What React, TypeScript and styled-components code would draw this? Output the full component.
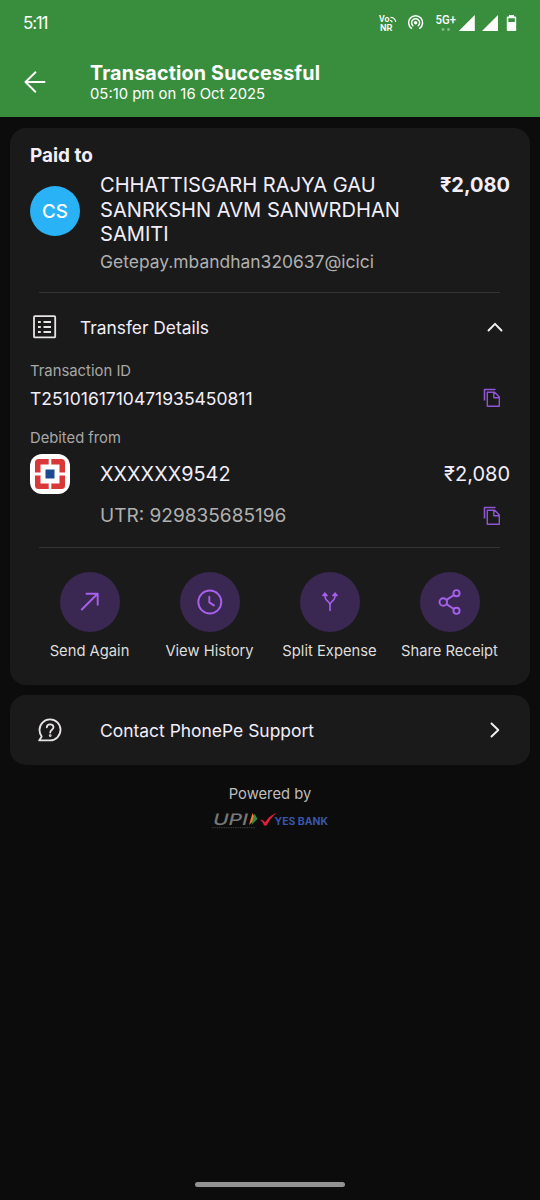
import React from "react";
import styled, { createGlobalStyle } from "styled-components";

const GlobalStyle = createGlobalStyle`
  *, *::before, *::after { box-sizing: border-box; }
  html, body { margin: 0; background: #0c0c0c; }
  body { font-family: Inter, Roboto, "Liberation Sans", sans-serif; color: #f2eefb; }
  svg { display: block; flex: none; }
`;

const Screen = styled.div`
  display: flex;
  flex-direction: column;
  height: 1200px;
  background: #0c0c0c;
  overflow: hidden;
`;

const Header = styled.header`
  height: 117px;
  background: #398e3d;
  color: #fff;
`;

const StatusBar = styled.div`
  display: flex;
  align-items: center;
  height: 46px;
  padding: 0 22px 0 23px;
`;

const Clock = styled.span`
  flex: 1;
  font-size: 17px;
  letter-spacing: -1.2px;
`;

const TitleBar = styled.div`
  display: flex;
  align-items: center;
  height: 71px;
  padding-left: 24px;
`;

const Titles = styled.div`
  display: flex;
  flex-direction: column;
  margin: 3px 0 0 44px;
`;

const Title = styled.h1`
  margin: 0;
  font-size: 19.7px;
  font-weight: 700;
  line-height: 22px;
  letter-spacing: 0.17px;
`;

const Subtitle = styled.span`
  font-size: 14.85px;
  line-height: 20px;
`;

const Card = styled.section`
  display: flex;
  flex-direction: column;
  margin: 11px 10px 0;
  padding: 16px 20px 0;
  height: 557px;
  border-radius: 16px;
  background: #1a1a1a;
`;

const Text = styled.span<{ $size: number; $line: number; $weight?: number; $color?: string; $spacing?: number }>`
  display: block;
  font-size: ${(p) => p.$size}px;
  line-height: ${(p) => p.$line}px;
  font-weight: ${(p) => p.$weight ?? 400};
  color: ${(p) => p.$color ?? "#f2eefb"};
  letter-spacing: ${(p) => p.$spacing ?? 0}px;
  white-space: nowrap;
`;

const Payee = styled.div`
  display: flex;
  margin-top: 5px;
  height: 101px;
`;

const Avatar = styled.div`
  display: flex;
  align-items: center;
  justify-content: center;
  width: 50px;
  height: 50px;
  margin: 13px 20px 0 0;
  border-radius: 50%;
  background: #29b2f5;
  color: #fff;
  font-size: 18.8px;
  font-weight: 500;
`;

const PayeeInfo = styled.div`
  flex: 1;
  display: flex;
  flex-direction: column;
  gap: 4px;
`;

const Divider = styled.hr`
  width: 461px;
  height: 1px;
  margin: 0 0 0 9px;
  border: 0;
  background: #333;
`;

const DetailsRow = styled.div`
  display: flex;
  align-items: center;
  height: 68px;
  padding: 0 7px 0 2px;
`;

const Row = styled.div<{ $height: number; $top: number; $indent?: number; $end?: number }>`
  display: flex;
  align-items: center;
  height: ${(p) => p.$height}px;
  margin-top: ${(p) => p.$top}px;
  padding: 0 ${(p) => p.$end ?? 0}px 0 ${(p) => p.$indent ?? 0}px;
`;

const Grow = styled.div`
  flex: 1;
`;

const BankLogo = styled.div`
  display: flex;
  align-items: center;
  justify-content: center;
  width: 40px;
  height: 40px;
  margin-right: 30px;
  border-radius: 12px;
  background: #fff;
`;

const Actions = styled.div`
  display: grid;
  grid-template-columns: repeat(4, 120px);
  padding-top: 24px;
  margin-left: -0.5px;
`;

const Action = styled.div`
  display: flex;
  flex-direction: column;
  align-items: center;
  gap: 9px;
`;

const ActionCircle = styled.div`
  display: flex;
  align-items: center;
  justify-content: center;
  width: 60px;
  height: 60px;
  border-radius: 50%;
  background: #3a2752;
`;

const SupportCard = styled.section`
  display: flex;
  align-items: center;
  height: 70px;
  margin: 10px 10px 0;
  padding: 0 30px 0 27px;
  border-radius: 16px;
  background: #1a1a1a;
`;

const Footer = styled.footer`
  flex: 1;
  display: flex;
  flex-direction: column;
  align-items: center;
  padding-top: 19px;
`;

const Brands = styled.div`
  display: flex;
  margin: 5px 0 0 3px;
`;

const HomeIndicator = styled.div`
  align-self: center;
  width: 150px;
  height: 5px;
  margin-bottom: 13px;
  border-radius: 3px;
  background: #929292;
`;

const StatusIcons = () => (
  <svg width="142" height="26" viewBox="376 10 142 26" fill="#fff">
    <g fontFamily="Roboto, sans-serif" fontWeight="600">
      <text x="379" y="22.300" fontSize="8.5" textLength="10.500" lengthAdjust="spacingAndGlyphs">Vo</text>
      <text x="380" y="30.500" fontSize="8.5" textLength="12.5" lengthAdjust="spacingAndGlyphs">NR</text>
    </g>
    <g fill="none" stroke="#fff" strokeWidth="1.2">
      <path d="M390 20.500c1.200 0 2 .7 2 1.800M390.500 17.300c2.800 0 5 2 5.200 4.700" />
    </g>
    <g fill="none" stroke="#fff" strokeWidth="1.5" strokeLinecap="round">
      <path d="M411.500 28.300a7 7 0 1 1 8.200 0" />
      <path d="M412.900 25.700a4 4 0 1 1 5.400 0" />
    </g>
    <circle cx="415.600" cy="22.800" r="1.700" />
    <text x="435.500" y="23.500" fontFamily="Roboto, sans-serif" fontSize="12" fontWeight="500" textLength="20.500" lengthAdjust="spacingAndGlyphs">5G+</text>
    <circle cx="443" cy="29.500" r="1.400" opacity=".4" />
    <circle cx="448.500" cy="29.500" r="1.400" opacity=".4" />
    <path d="M474.800 15v16h-16zM498 15v16h-16z" />
    <path fillRule="evenodd" d="M509 15h5v1.500h1.300q.9 0 .9.900v12.700q0 .9-.9.900h-7.600q-.9 0-.9-.9V17.400q0-.9.9-.9h1.300zM508.300 18.200v3.800h6.500v-3.800z" />
  </svg>
);

const BackIcon = () => (
  <svg width="22" height="22" viewBox="0 0 22 22" fill="none" stroke="#fff" strokeWidth="1.900" strokeLinecap="round" strokeLinejoin="round">
    <path d="M20.500 11H1.500M11.500 1.300 1.500 11l9.800 9.700" />
  </svg>
);

const ListIcon = () => (
  <svg width="26" height="26" viewBox="0 0 26 26" fill="none" stroke="#e8e4e4" strokeWidth="1.800">
    <rect x="2" y="2.200" width="21.200" height="21.200" rx="1" />
    <path d="M11.500 8h7.500M11.500 13h7.500M11.500 18h7.500" />
    <path d="M6 8h2.800M6 13h2.800M6 18h2.800" strokeWidth="2.200" />
  </svg>
);

const ChevronUp = () => (
  <svg width="16" height="12" viewBox="0 0 16 12" fill="none" stroke="#f2f0f2" strokeWidth="1.900" strokeLinecap="round" strokeLinejoin="round">
    <path d="M1.500 9.500 8 2.800l6.500 6.700" />
  </svg>
);

const ChevronRight = () => (
  <svg width="10" height="18" viewBox="0 0 10 18" fill="none" stroke="#f2f0f2" strokeWidth="1.900" strokeLinecap="round" strokeLinejoin="round">
    <path d="M1.500 2.500 8.300 9l-6.800 6.500" />
  </svg>
);

const CopyIcon = () => (
  <svg width="18" height="20" viewBox="0 0 18 20" fill="none" stroke="#8f54d8" strokeWidth="1.400" strokeLinejoin="round">
    <path d="M1.500 12.500V1.500H12.500" strokeWidth="1.600" />
    <path d="M4.300 4.300h7.400l4.600 4.700v9.300H4.300zM10.800 4.500v5.200h5.400" />
  </svg>
);

const BankMark = () => (
  <svg width="30" height="30" viewBox="0 0 30 30">
    <path fill="#d93838" d="M0 13.500V3.500Q0 0 3.500 0H13.700v5.500H5.500v8zM16.300 0h10.200Q30 0 30 3.500V13.500h-5.500V5.500H16.300zM0 16.500h5.500v8H13.700v5.500H3.500Q0 30 0 26.500zM24.500 16.500H30v10q0 3.500-3.500 3.500H16.300v-5.500h8.200z" />
    <path fill="#1c4b8f" d="M10.500 10.500h9v9h-9z" />
  </svg>
);

const actionStroke = { fill: "none", stroke: "#a661ec", strokeWidth: 1.9, strokeLinecap: "round" as const, strokeLinejoin: "round" as const };

const SendIcon = () => (
  <svg width="30" height="30" viewBox="0 0 30 30" {...actionStroke}>
    <path d="M6.800 22.500 22.300 7M11.500 6.800h11.200v11" />
  </svg>
);

const HistoryIcon = () => (
  <svg width="30" height="30" viewBox="0 0 30 30" {...actionStroke}>
    <circle cx="14.800" cy="15" r="11.500" />
    <path d="M14.300 9.700v5.700l4.600 3" />
  </svg>
);

const SplitIcon = () => (
  <svg width="30" height="30" viewBox="0 0 30 30" {...actionStroke} strokeWidth={1.6}>
    <path d="M15 23.500v-5.300c0-1.300-.5-2.300-1.500-3.200l-1.400-1.300c-1.300-1.200-2-2.200-2-4V7.500M15 18.200c0-1.300.5-2.300 1.500-3.200l1.400-1.300c1.300-1.200 2-2.200 2-4V7.500" />
    <path d="m7.700 8.700 2.200-2.900 2.400 2.900zM17.700 8.700l2.400-2.900 2.200 2.900z" fill="#a661ec" strokeWidth="1.200" />
  </svg>
);

const ShareIcon = () => (
  <svg width="30" height="30" viewBox="0 0 30 30" {...actionStroke}>
    <circle cx="8.300" cy="15" r="3.800" />
    <circle cx="21.500" cy="6.200" r="3.100" />
    <circle cx="21.500" cy="23.800" r="3.100" />
    <path d="m11.500 12.900 7.400-4.900M11.500 17.100l7.400 4.900" />
  </svg>
);

const SupportIcon = () => (
  <svg width="26" height="26" viewBox="0 0 26 26" fill="none" stroke="#e8e4e4" strokeWidth="1.800" strokeLinecap="round" strokeLinejoin="round">
    <path d="M2.200 23.400H13A10.500 10.500 0 1 0 2.500 13c0 2.600.9 4.600 2.200 6.500z" />
    <path d="M9.800 10.300c.1-1.900 1.500-3 3.300-3s3.400 1.200 3.400 3c0 2.400-3.300 2.500-3.300 5.300" />
    <circle cx="13.200" cy="18.600" r=".5" />
  </svg>
);

const UpiLogo = () => (
  <svg width="48" height="22" viewBox="0 0 48 22">
    <text x="0" y="15.600" transform="translate(4 0) skewX(-14)" fontFamily="Inter, sans-serif" fontWeight="500" fontSize="16" fill="#777" textLength="34.500" lengthAdjust="spacingAndGlyphs">UPI</text>
    <path d="M40.500 4 43.500 10l-6.500 6z" fill="#ee7a35" />
    <path d="M42.500 4.500 45.500 10 39.500 16z" fill="#2c8a45" />
    <path d="M0 18.600h43" stroke="#333" strokeWidth="1.300" strokeDasharray="1.500 .8" />
  </svg>
);

const YesBankLogo = () => (
  <svg width="72" height="22" viewBox="0 0 72 22">
    <path d="M0 11c2-.8 3.500-.2 5 2.500C8 9 11 6 16.500 4 12 7.500 9 11.500 6.500 16.500H4C3 13.500 2 12 0 11z" fill="#e3213f" />
    <text x="14.500" y="16" fontFamily="Inter, sans-serif" fontWeight="700" fontSize="10.500" fill="#3a56a8" textLength="53.500" lengthAdjust="spacingAndGlyphs">YES BANK</text>
  </svg>
);

const actions = [
  { label: "Send Again", Icon: SendIcon },
  { label: "View History", Icon: HistoryIcon },
  { label: "Split Expense", Icon: SplitIcon },
  { label: "Share Receipt", Icon: ShareIcon },
];

export default function App() {
  return (
    <Screen>
      <GlobalStyle />
      <Header>
        <StatusBar>
          <Clock>5:11</Clock>
          <StatusIcons />
        </StatusBar>
        <TitleBar>
          <BackIcon />
          <Titles>
            <Title>Transaction Successful</Title>
            <Subtitle>05:10 pm on 16 Oct 2025</Subtitle>
          </Titles>
        </TitleBar>
      </Header>

      <Card>
        <Text $size={18.9} $line={24} $weight={700}>Paid to</Text>
        <Payee>
          <Avatar>CS</Avatar>
          <PayeeInfo>
            <Text $size={20.1} $line={24.5}>
              CHHATTISGARH RAJYA GAU
              <br />
              SANRKSHN AVM SANWRDHAN
              <br />
              SAMITI
            </Text>
            <Text $size={17.45} $line={22} $color="#b0b0b0">Getepay.mbandhan320637@icici</Text>
          </PayeeInfo>
          <Text $size={20} $line={24.5} $weight={700}>₹2,080</Text>
        </Payee>
        <Row $height={18} $top={0} />
        <Divider />
        <DetailsRow>
          <ListIcon />
          <Row $height={24} $top={2} $indent={22}>
            <Text $size={17.35} $line={24}>Transfer Details</Text>
          </Row>
          <Grow />
          <ChevronUp />
        </DetailsRow>
        <Text $size={14.85} $line={20} $color="#a8a8a8">Transaction ID</Text>
        <Row $height={28} $top={3} $end={9}>
          <Text $size={17.5} $line={25}>T2510161710471935450811</Text>
          <Grow />
          <CopyIcon />
        </Row>
        <Row $height={20} $top={16}>
          <Text $size={14.75} $line={20} $color="#a8a8a8">Debited from</Text>
        </Row>
        <Row $height={40} $top={6}>
          <BankLogo><BankMark /></BankLogo>
          <Text $size={19.85} $line={24}>XXXXXX9542</Text>
          <Grow />
          <Text $size={20} $line={24}>₹2,080</Text>
        </Row>
        <Row $height={24} $top={9.5} $indent={70} $end={9}>
          <Text $size={19.05} $line={24} $color="#b0b0b0">UTR: 929835685196</Text>
          <Grow />
          <CopyIcon />
        </Row>
        <Row $height={19.5} $top={0} />
        <Divider />
        <Actions>
          {actions.map(({ label, Icon }) => (
            <Action key={label}>
              <ActionCircle><Icon /></ActionCircle>
              <Text $size={14.75} $line={20} $color="#dedede">{label}</Text>
            </Action>
          ))}
        </Actions>
      </Card>

      <SupportCard>
        <SupportIcon />
        <Row $height={24} $top={1} $indent={37}>
          <Text $size={17.45} $line={24}>Contact PhonePe Support</Text>
        </Row>
        <Grow />
        <ChevronRight />
      </SupportCard>

      <Footer>
        <Text $size={14.75} $line={20} $color="#bdbdbd">Powered by</Text>
        <Brands>
          <UpiLogo />
          <YesBankLogo />
        </Brands>
      </Footer>
      <HomeIndicator />
    </Screen>
  );
}
